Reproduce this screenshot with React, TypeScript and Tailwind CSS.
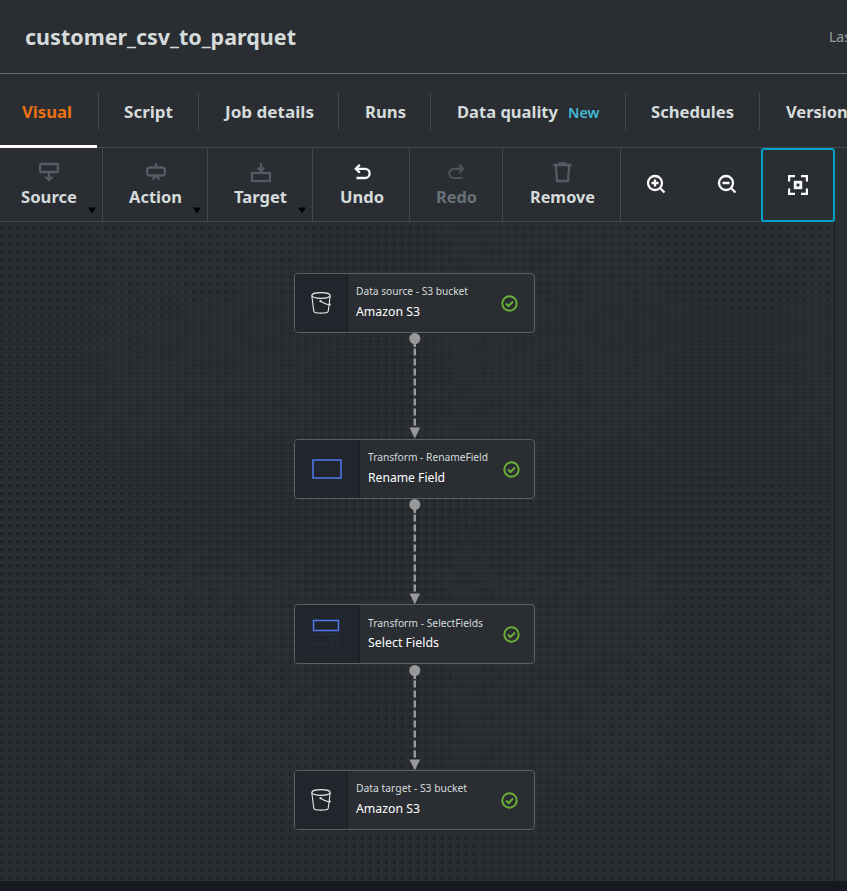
import type { ReactNode } from 'react';

const divider = 'border-r border-[#444950]';

function Label({ w, children, size = 16, weight = 700, fill = '#d5dbdb' }: { w: number; children: string; size?: number; weight?: number; fill?: string }) {
  return (
    <svg width={w} height="24" className="block overflow-visible">
      <text x="0" y="18" textLength={w} lengthAdjust="spacingAndGlyphs" fontSize={size} fontWeight={weight} fill={fill}>
        {children}
      </text>
    </svg>
  );
}

function Tab({ width, pad, children, last = false }: { width: string; pad: string; children: ReactNode; last?: boolean }) {
  return (
    <div className={`flex h-[37px] shrink-0 items-center pt-px ${width} ${pad} ${last ? '' : divider}`}>{children}</div>
  );
}

function Tool({ width, label, w, icon, pad, caret = false, fill = '#d5dbdb' }: { width: string; label: string; w: number; icon: ReactNode; pad: string; caret?: boolean; fill?: string }) {
  return (
    <button className={`relative flex h-[73px] shrink-0 flex-col items-start pt-[13px] ${width} ${pad} ${divider}`}>
      <span className="flex h-6 justify-center" style={{ width: w }}>{icon}</span>
      <Label w={w} fill={fill}>{label}</Label>
      {caret && (
        <svg className="absolute right-[6px] bottom-[7px]" width="8" height="7" viewBox="0 0 8 7"><path d="M0 .5h8L4 6.500z" fill="#000" /></svg>
      )}
    </button>
  );
}

const SourceIcon = (
  <svg width="22" height="22" viewBox="0 0 22 22" fill="none" stroke="#545b64" strokeWidth="2.300">
    <rect x="2" y="3" width="18" height="8" rx="1" /><path d="M11 11v8M7.500 15.700l3.500 3.500 3.500-3.500" />
  </svg>
);
const ActionIcon = (
  <svg width="22" height="22" viewBox="0 0 22 22" fill="none" stroke="#545b64" strokeWidth="2.300">
    <rect x="2" y="6.500" width="18" height="8" rx="3" /><path d="M11 2v5M7.500 18.500L11 15l3.500 3.500" />
  </svg>
);
const TargetIcon = (
  <svg width="22" height="22" viewBox="0 0 22 22" fill="none" stroke="#545b64" strokeWidth="2.300">
    <rect x="2" y="12" width="18" height="8" /><path d="M11 2v8M7.500 6.500l3.500 3.500 3.500-3.500" />
  </svg>
);
const undoPath = 'M5 7.800h9a3.800 3.800 0 0 1 0 9.200H5.500M8.800 3.800L4.800 7.800l4 4';
const UndoIcon = (
  <svg className="-ml-px" width="22" height="22" viewBox="0 0 22 22" fill="none" stroke="#fafafa" strokeWidth="2.300"><path d={undoPath} /></svg>
);
const RedoIcon = (
  <svg className="-scale-x-100" width="22" height="22" viewBox="0 0 22 22" fill="none" stroke="#4d5257" strokeWidth="2.200"><path d={undoPath} /></svg>
);
const TrashIcon = (
  <svg width="22" height="22" viewBox="0 0 22 22" fill="none" stroke="#545b64" strokeWidth="2.300">
    <path d="M1.500 4h18M6.500 2.500h8M3.800 4l1.200 16h11l1.200-16" />
  </svg>
);

function Magnifier({ plus }: { plus: boolean }) {
  return (
    <svg className="-mt-px" width="20" height="20" viewBox="0 0 20 20" fill="none" stroke="#fafafa" strokeWidth="2.300">
      <circle cx="9" cy="9" r="7" /><path d="M14 14l4.500 4.500M5.500 9h7" />{plus && <path d="M9 5.500v7" />}
    </svg>
  );
}

const Bucket = (
  <svg width="22" height="24" viewBox="0 0 22 24" fill="none" stroke="#e4e6e8" strokeWidth="1.100">
    <ellipse cx="11" cy="4.500" rx="9.200" ry="2.900" />
    <path d="M1.800 4.500l2 15.800c.3 1.200 3.200 1.800 7.200 1.800s6.900-.6 7.200-1.800l2-15.800M10.500 10.200c3.200 2 6 3.200 8.800 3.800 1.500.3 1.400-1-.4-1.700" />
    <circle cx="10.500" cy="10.200" r=".6" />
  </svg>
);
const RenameIcon = (
  <svg width="30" height="20" viewBox="0 0 30 20" fill="none">
    <rect x="1" y="1" width="28" height="18" stroke="#4d7af0" strokeWidth="1.500" />
    <path d="M4 14l3-7 3 7M5 11.500h4M12 4v12" stroke="#202e44" />
  </svg>
);
const SelectIcon = (
  <svg width="30" height="30" viewBox="0 0 30 30" fill="none">
    <rect x="1.500" y="1.500" width="25" height="10" stroke="#4d7af0" strokeWidth="1.500" />
    <path d="M26 15.500H1v9.500h15M18 18l2.500 9 2-3 4 4 1.500-1.500-4-4 3-1.500z" stroke="#26313f" />
  </svg>
);

function GraphNode({ top, kind, kindW, name, nameW, icon, transform = false, gap }: { top: string; kind: string; kindW: number; name: string; nameW: number; icon: ReactNode; transform?: boolean; gap: string }) {
  return (
    <div className={`absolute left-[294px] flex h-[60px] w-[241px] overflow-hidden rounded-[4px] border border-[#5c6166] bg-[#2a2e33] ${top}`}>
      <div className={`flex shrink-0 items-center justify-center border-r border-[#1b1f25] bg-[#21252c] ${transform ? 'w-[65px]' : 'w-[53px]'}`}>{icon}</div>
      <div className={`flex flex-col pl-2 ${gap}`}>
        <Label w={kindW} size={11} weight={400}>{kind}</Label>
        <div className={transform && name === 'Select Fields' ? '-mt-[4px]' : '-mt-[3px]'}><Label w={nameW} size={13} weight={400} fill="#fff">{name}</Label></div>
      </div>
      <svg className={`absolute top-[21px] ${transform ? 'right-[14px]' : 'right-[16px]'}`} width="17" height="17" viewBox="0 0 17 17" fill="none" stroke="#6aaf35" strokeWidth="2">
        <circle cx="8.500" cy="8.500" r="7.200" /><path d="M5 8.500l2.500 2.500 4.500-4.500" />
      </svg>
    </div>
  );
}

function Edge({ top }: { top: string }) {
  return (
    <svg className={`absolute left-[408px] ${top}`} width="14" height="106" viewBox="0 0 14 106">
      <path d="M6.800 5v92" stroke="#999" strokeWidth="2.400" strokeDasharray="7 3" strokeDashoffset="-.5" />
      <path d="M6.800 6v8" stroke="#999" strokeWidth="2.400" />
      <circle cx="6.800" cy="5.500" r="5.500" fill="#999" />
      <path d="M1.500 94.500h10.600L6.800 105.500z" fill="#999" />
    </svg>
  );
}

export default function App() {
  return (
    <div className="flex h-[891px] w-[847px] flex-col overflow-hidden bg-[#2a2e33] font-['Noto_Sans',sans-serif]">
      <header className="flex h-[74px] shrink-0 items-center justify-between border-b border-[#687078] pl-[25px]">
        <div className="pt-[4px]"><Label w={271} size={21.5}>customer_csv_to_parquet</Label></div>
        <div className="w-[18px] overflow-hidden whitespace-nowrap text-sm text-[#95a0a0]">Last modified</div>
      </header>
      <nav className="relative flex h-[74px] shrink-0 items-center border-b border-[#444950] pt-px">
        <Tab width="w-[99px]" pad="pl-[22px]"><Label w={50} fill="#ec7211">Visual</Label></Tab>
        <Tab width="w-[100px]" pad="pl-[25px]"><Label w={49}>Script</Label></Tab>
        <Tab width="w-[140px]" pad="pl-[25.500px]"><Label w={89}>Job details</Label></Tab>
        <Tab width="w-[92px]" pad="pl-[26px]"><Label w={41}>Runs</Label></Tab>
        <Tab width="w-[195px]" pad="pl-[26px]"><Label w={101}>Data quality</Label><div className="ml-[10px]"><Label w={31.500} size={14.500} weight={600} fill="#44b9d6">New</Label></div></Tab>
        <Tab width="w-[134px]" pad="pl-[25px]"><Label w={83}>Schedules</Label></Tab>
        <Tab width="w-[87px]" pad="pl-[26px]" last><Label w={70}>Versions</Label></Tab>
        <span className="absolute -bottom-px left-0 h-[3px] w-[97px] bg-white" />
      </nav>
      <div className="flex h-[74px] w-[835px] shrink-0 border-b border-[#444950]">
        <Tool width="w-[103px]" pad="pl-[21px]" label="Source" w={56} icon={SourceIcon} caret />
        <Tool width="w-[105px]" pad="pl-[26px]" label="Action" w={53} icon={ActionIcon} caret />
        <Tool width="w-[105px]" pad="pl-[26px]" label="Target" w={53} icon={TargetIcon} caret />
        <Tool width="w-[97px]" pad="pl-[27px]" label="Undo" w={44} icon={UndoIcon} />
        <Tool width="w-[93px]" pad="pl-[26px]" label="Redo" w={41} icon={RedoIcon} fill="#687078" />
        <Tool width="w-[118px]" pad="pl-[27px]" label="Remove" w={65} icon={TrashIcon} />
        <button className="flex h-[73px] w-[70px] items-center justify-center"><Magnifier plus /></button>
        <button className="flex h-[73px] w-[70px] items-center justify-center pl-px"><Magnifier plus={false} /></button>
        <button className="flex h-[74px] w-[74px] items-center justify-center rounded-[3px] border-2 border-[#00a1c9]">
          <svg width="20" height="20" viewBox="0 0 20 20" fill="none" stroke="#fafafa"><path d="M1 6.500V1h6M13 1h6v5.500M19 13.500V19h-6M7 19H1v-5.500" strokeWidth="2.400" /><rect x="7.200" y="7.200" width="5.600" height="5.600" strokeWidth="2.800" /></svg>
        </button>
      </div>
      <main className="relative h-[659px] w-[835px] shrink-0 border-r border-[#16191f]">
        <svg className="block" width="834" height="659">
          <defs>
            <pattern id="dots" x="-2.600" y="2.700" width="8.023" height="8.023" patternUnits="userSpaceOnUse">
              <circle cx="4" cy="4" r="1.100" fill="#16191f" />
            </pattern>
          </defs>
          <rect width="834" height="659" fill="url(#dots)" />
        </svg>
        <Edge top="top-[111px]" />
        <Edge top="top-[277px]" />
        <Edge top="top-[442.500px]" />
        <GraphNode top="top-[51px]" gap="pt-[3px]" kind="Data source - S3 bucket" kindW={112} name="Amazon S3" nameW={64} icon={Bucket} />
        <GraphNode top="top-[216.600px]" gap="pt-[3px]" kind="Transform - RenameField" kindW={120} name="Rename Field" nameW={77} icon={RenameIcon} transform />
        <GraphNode top="top-[382.200px]" gap="pt-[4px]" kind="Transform - SelectFields" kindW={115} name="Select Fields" nameW={71} icon={SelectIcon} transform />
        <GraphNode top="top-[547.700px]" gap="pt-[3px]" kind="Data target - S3 bucket" kindW={111} name="Amazon S3" nameW={64} icon={Bucket} />
      </main>
      <footer className="h-[10px] shrink-0 bg-[#16191f]" />
    </div>
  );
}
